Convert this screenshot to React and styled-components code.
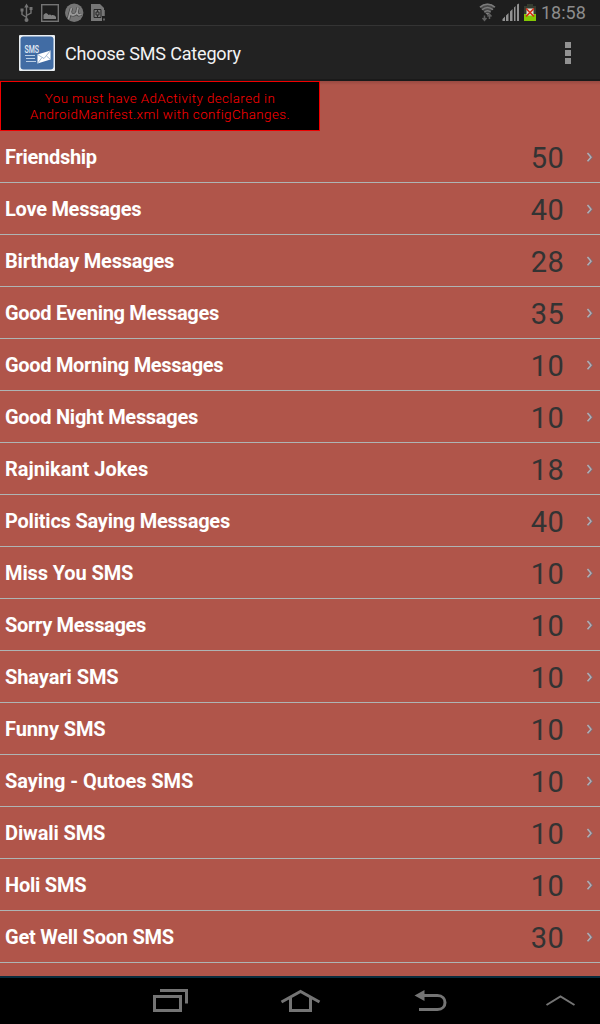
import React from 'react';
import styled, { createGlobalStyle } from 'styled-components';

const GlobalStyle = createGlobalStyle`
  * {
    box-sizing: border-box;
  }
  body {
    margin: 0;
    background: #000;
    font-family: Roboto, "Liberation Sans", sans-serif;
  }
`;

const Screen = styled.div`
  width: 600px;
  height: 1024px;
  display: flex;
  flex-direction: column;
  overflow: hidden;
  background: #b0554a;
`;

const StatusBar = styled.div`
  flex: none;
  height: 26px;
  display: flex;
  justify-content: space-between;
  background: #1e1e1e;
  border-bottom: 1px solid #343434;
`;

const Status = styled.div`
  display: flex;
  height: 25px;
`;

const Clock = styled.span`
  width: 60px;
  padding-left: 1px;
  font-size: 18px;
  line-height: 25px;
  color: #8c8c8c;
`;

const ActionBar = styled.header`
  flex: none;
  height: 55px;
  display: flex;
  align-items: center;
  padding: 0 29px 0 19px;
  background: #222;
  border-bottom: 2px solid #1a1a1a;
`;

const Title = styled.h1`
  flex: 1;
  margin: 0 0 0 10px;
  padding-top: 2px;
  font-size: 18px;
  font-weight: 400;
  line-height: 24px;
  letter-spacing: -0.17px;
  color: #f3f3f3;
`;

const MenuButton = styled.div`
  display: flex;
  flex-direction: column;
  gap: 2px;
  &>i {
    width: 6px;
    height: 6px;
    background: #929292;
  }
`;

const Content = styled.main`
  flex: 1;
  min-height: 0;
  overflow: hidden;
  background: linear-gradient(#984941, #b0554a 4px);
`;

const Ad = styled.div`
  width: 320px;
  height: 50px;
  padding-top: 9px;
  border: 1px solid #f00000;
  background: #000;
  color: #ff0000;
  font-size: 13.33px;
  font-weight: 300;
  line-height: 16px;
  text-align: center;
  white-space: pre-line;
  letter-spacing: 0.43px;
`;

const List = styled.ul`
  margin: 0;
  padding: 0;
  list-style: none;
`;

const Row = styled.li`
  height: 52px;
  display: flex;
  align-items: center;
  padding: 0 6px 0 5px;
  border-bottom: 1px solid #aeb4b4;
`;

const Name = styled.span`
  flex: 1;
  font-size: 20px;
  font-weight: 700;
  letter-spacing: ${(props) => props.$tracking}px;
  color: #fff;
`;

const Count = styled.span`
  margin-right: 21px;
  padding-top: 2px;
  font-size: 29px;
  font-weight: 400;
  line-height: 36px;
  letter-spacing: 0.3px;
  color: #333;
`;

const NavBar = styled.nav`
  flex: none;
  height: 48px;
  background: #000;
  border-top: 2px solid #0a2c3d;
  &>svg {
    display: block;
  }
`;

const categories = [
  { name: 'Friendship', count: 50, tracking: -0.28 },
  { name: 'Love Messages', count: 40, tracking: -0.27 },
  { name: 'Birthday Messages', count: 28, tracking: -0.21 },
  { name: 'Good Evening Messages', count: 35, tracking: -0.31 },
  { name: 'Good Morning Messages', count: 10, tracking: -0.31 },
  { name: 'Good Night Messages', count: 10, tracking: -0.28 },
  { name: 'Rajnikant Jokes', count: 18, tracking: -0.03 },
  { name: 'Politics Saying Messages', count: 40, tracking: -0.22 },
  { name: 'Miss You SMS', count: 10, tracking: -0.12 },
  { name: 'Sorry Messages', count: 10, tracking: -0.32 },
  { name: 'Shayari SMS', count: 10, tracking: -0.08 },
  { name: 'Funny SMS', count: 10, tracking: -0.12 },
  { name: 'Saying - Qutoes SMS', count: 10, tracking: -0.08 },
  { name: 'Diwali SMS', count: 10, tracking: -0.11 },
  { name: 'Holi SMS', count: 10, tracking: -0.22 },
  { name: 'Get Well Soon SMS', count: 30, tracking: -0.24 },
];

// usb, picture, torrent, sim card
function NotificationIcons() {
  return (
    <svg width="110" height="25" viewBox="0 0 110 25" fill="none" stroke="#747474" strokeWidth="1.4">
      <path d="M26.5 6v14M26.5 17.5l-4.5-3v-4M26.5 15.5l4.5-2.5v-4" />
      <path d="M26.500 3.500l2.300 4h-4.600zM20.500 8.500h3v3h-3zM29.500 7h3v3h-3z" fill="#747474" stroke="none" />
      <circle cx="26.500" cy="20" r="2" fill="#747474" stroke="none" />
      <rect x="41.700" y="4.700" width="16.600" height="16.600" />
      <path d="M43.500 19v-4c1.500-2 3.500-2.500 5 0 1-.5 2-.8 3 .5 1.500-1 3.500 0 4.500 1.500v2z" fill="#808080" stroke="none" />
      <circle cx="74.200" cy="12.800" r="9.200" fill="#757575" stroke="none" />
      <path d="M71.500 8l-1.500 5-1.500 6M70.500 12c0 4 5 4 6.500 0l1-4.500M77 12c0 3 2 3.500 4.500 2" stroke="#444" strokeWidth="3.200" />
      <path d="M71.500 8l-1.500 5-1.500 6M70.500 12c0 4 5 4 6.500 0l1-4.500M77 12c0 3 2 3.500 4.500 2" stroke="#999" strokeWidth="1.800" />
      <path d="M91 4h9l4 4v8h-2v5H91z" fill="#777" stroke="none" />
      <path d="M94 9.500h7v8h-7zM96 12h3v3h-3zM97.500 9.500V12M97.500 15v2.500" stroke="#292929" strokeWidth="1" />
      <path d="M104 10v6M104 18.500v2" stroke="#777" strokeWidth="1.500" />
    </svg>
  );
}

// wifi, signal strength, battery
function SystemIcons() {
  return (
    <svg width="61" height="25" viewBox="479 0 61 25" fill="none">
      <path d="M479.500 6.500c4.500-4 11-4 15.500 0L487.300 15z" fill="#484848" />
      <g stroke="#7c7c7c" strokeWidth="1.500">
        <path d="M480 7.200c4.500-4 10.500-4 15 0M482 9.800c3.500-3 7.500-3 11 0M484.300 12.200c2-1.700 4.400-1.700 6.400 0" />
      </g>
      <path d="M485.500 13h4l-2 2z" fill="#808080" />
      <path d="M484.500 15.500V20M482.500 18l2 2.300 2-2.300M489.500 19v-4.500M487.500 16.500l2-2.300 2 2.300" stroke="#606060" strokeWidth="1.500" />
      <path d="M502.500 21v-2l2.500-2.500V21zM506 21v-5.500l2.500-2.500v8zM510 21v-9.500l2.500-2.500v12zM514 21V7.500l1.500-1.500v15zM517 21V4.500l2-1V21z" fill="#929292" />
      <path d="M527 4h6v2h3v15h-12V6h3z" fill="#353c30" />
      <path d="M524 14h12v7h-12z" fill="#84c804" />
      <path d="M526.500 8.500h7v7h-7z" fill="#e4e4d8" />
      <path d="M526 8.500l8 8M534 8.500l-8 8" stroke="#d52d16" strokeWidth="1.700" />
    </svg>
  );
}

function AppIcon() {
  return (
    <svg width="36" height="36" viewBox="0 0 36 36">
      <rect width="36" height="36" rx="1" fill="#e9eef2" />
      <rect x="1.500" y="1.500" width="33" height="33" rx="3" fill="#416ca4" />
      <text x="5.500" y="17.500" fill="#e4edf6" fontSize="10.500" fontWeight="500" textLength="14.500" lengthAdjust="spacingAndGlyphs">SMS</text>
      <path d="M6 20.500h10M7 23.500h9M7 26.500h10" stroke="#b9cde4" strokeWidth="1" />
      <path d="M18.500 19.500L31.500 15.500v9l-13 4z" fill="#fff" />
      <path d="M18.500 19.500l6.500 4 6.500-8M18.500 28.500l4.500-6M31.500 24.500l-4-3.500" fill="none" stroke="#8ba7c6" strokeWidth=".8" />
    </svg>
  );
}

function Chevron() {
  return (
    <svg width="9" height="12" viewBox="0 0 9 12" fill="none">
      <path d="M3 2.200l3.500 4.100L3 10.400" stroke="#777079" strokeWidth="2.200" />
      <path d="M2.500 2l3.500 4.200-3.500 4.100" stroke="#b5adb4" strokeWidth="1.400" />
    </svg>
  );
}

function NavIcons() {
  return (
    <svg width="600" height="46" viewBox="0 978 600 46" fill="none" stroke="#747474" strokeWidth="3">
      <path d="M154.500 996.500h26v14h-26zM160 990.500h26.500v13" />
      <path d="M281.500 1002l19-10.500 19 10.500M290.500 998v12.500h20V998" />
      <path d="M423 995.500h14.500c10 0 10 14 0 14H419" />
      <path d="M414.500 995.500l10-5.500v11z" fill="#747474" stroke="none" />
      <path d="M546.500 1005l14-8.500 14 8.500" strokeWidth="2" />
    </svg>
  );
}

function App() {
  return (
    <Screen>
      <GlobalStyle />
      <StatusBar>
        <NotificationIcons />
        <Status>
          <SystemIcons />
          <Clock>18:58</Clock>
        </Status>
      </StatusBar>
      <ActionBar>
        <AppIcon />
        <Title>Choose SMS Category</Title>
        <MenuButton>
          <i />
          <i />
          <i />
        </MenuButton>
      </ActionBar>
      <Content>
        <Ad>{'You must have AdActivity declared in\nAndroidManifest.xml with configChanges.'}</Ad>
        <List>
          {categories.map((item) => (
            <Row key={item.name}>
              <Name $tracking={item.tracking}>{item.name}</Name>
              <Count>{item.count}</Count>
              <Chevron />
            </Row>
          ))}
        </List>
      </Content>
      <NavBar>
        <NavIcons />
      </NavBar>
    </Screen>
  );
}

export default App;
